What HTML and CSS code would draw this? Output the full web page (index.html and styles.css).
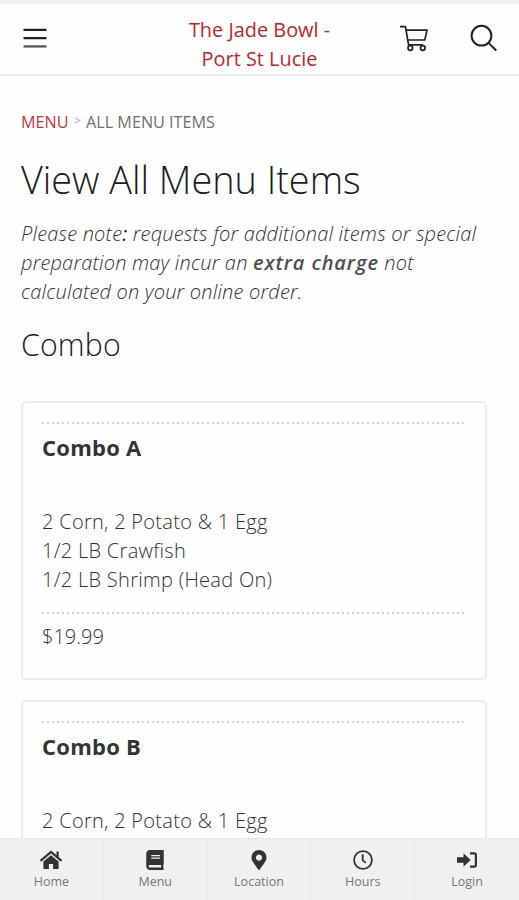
FILE: index.html
```html
<!DOCTYPE html>
<html lang="en">
<head>
<meta charset="utf-8">
<title>View All Menu Items</title>
<link rel="stylesheet" href="styles.css">
</head>
<body>
<div class="app">
  <header class="header">
    <svg class="burger" viewBox="0 0 24 22"><path d="M.5 3.8h23M.5 12.2h23"/><path class="soft" d="M.5 20.4h23"/></svg>
    <a class="brand"><span>The Jade Bowl -</span><br><span>Port St Lucie</span></a>
    <div class="actions">
      <svg class="cart" viewBox="0 0 30 28"><path d="M1 2.6H6.4L9.600 20.800H24M7.200 6.200H28L25.800 16H9"/><circle cx="11.300" cy="24" r="2.300"/><circle cx="23.800" cy="24" r="2.300"/></svg>
      <svg class="search" viewBox="0 0 28 28"><circle cx="11.500" cy="11.700" r="9.900"/><path d="M18.500 18.900l7.700 7.600"/></svg>
    </div>
  </header>
  <main class="content">
    <nav class="crumbs"><a class="c1">MENU</a><span class="sep">&gt;</span><span class="c2">ALL MENU ITEMS</span></nav>
    <h1><span>View All Menu Items</span></h1>
    <p class="note"><span>Please note<b>:</b> requests for additional items or special</span><br><span>preparation may incur an <strong>extra charge</strong> not</span><br><span>calculated on your online order.</span></p>
    <h2><span>Combo</span></h2>
    <section class="card">
      <h3><span>Combo A</span></h3>
      <p class="desc"><span>2 Corn, 2 Potato &amp; 1 Egg</span><br><span>1/2 LB Crawfish</span><br><span>1/2 LB Shrimp (Head On)</span></p>
      <p class="price"><span>$19.99</span></p>
    </section>
    <section class="card">
      <h3><span>Combo B</span></h3>
      <p class="desc"><span>2 Corn, 2 Potato &amp; 1 Egg</span></p>
    </section>
  </main>
  <nav class="tabs">
    <a class="tab"><svg viewBox="0 0 24 20"><path class="line" d="M1.500 10.800L12 1.900l10.500 8.900M18.600 1.600v6"/><path d="M12 5.200l7.600 6.400V19h-5.500v-5H9.900v5H4.400v-7.400z"/></svg><span>Home</span></a>
    <a class="tab"><svg viewBox="-40 0 528 512"><path d="M448 360V24c0-13.300-10.700-24-24-24H96C43 0 0 43 0 96v320c0 53 43 96 96 96h328c13.300 0 24-10.700 24-24v-16c0-7.500-3.500-14.300-8.900-18.700-4.200-15.400-4.200-59.300 0-74.700 5.400-4.300 8.900-11.100 8.900-18.600zM128 134c0-3.300 2.700-6 6-6h212c3.300 0 6 2.700 6 6v20c0 3.300-2.700 6-6 6H134c-3.300 0-6-2.700-6-6zm0 64c0-3.300 2.700-6 6-6h212c3.300 0 6 2.700 6 6v20c0 3.300-2.700 6-6 6H134c-3.300 0-6-2.700-6-6zm253.400 250H96c-17.700 0-32-14.300-32-32 0-17.600 14.400-32 32-32h285.400c-1.900 17.100-1.900 46.900 0 64z"/></svg><span>Menu</span></a>
    <a class="tab"><svg viewBox="0 0 384 512"><path d="M172.300 501.700C27 291 0 269.400 0 192 0 86 86 0 192 0s192 86 192 192c0 77.400-27 99-172.300 309.700-9.500 13.700-29.900 13.700-39.400 0zM192 272c44.200 0 80-35.800 80-80s-35.800-80-80-80-80 35.800-80 80 35.800 80 80 80z"/></svg><span>Location</span></a>
    <a class="tab"><svg viewBox="0 0 20 20"><circle class="ring" cx="10" cy="10" r="8.900"/><path class="hand" d="M9.700 4.200v6.200l3.200 2.500"/></svg><span>Hours</span></a>
    <a class="tab"><svg viewBox="0 0 22 20"><path d="M1 7.200h6.500V3.200L14.700 10l-7.200 6.800v-4H1z"/><path class="door" d="M14 3.300h4.200q1.700 0 1.700 1.700v10q0 1.700-1.700 1.700H14"/></svg><span>Login</span></a>
  </nav>
</div>
</body>
</html>
```
FILE: styles.css
```css
* { box-sizing: border-box; }
body {
  margin: 0;
  background: #fefefe;
  color: #333;
  font: 300 20px/28.800px "Open Sans", sans-serif;
}
h1, h2, h3, p { margin: 0; font-weight: 300; }
span { white-space: nowrap; }
.app { height: 900px; display: flex; flex-direction: column; overflow: hidden; }
.header {
  flex: none;
  height: 76px;
  border-top: 4px solid #f0f0f0;
  border-bottom: 2px solid #ebebeb;
  padding: 0 21px 0 23px;
  display: grid;
  grid-template-columns: 110px 1fr 110px;
}
.header svg { fill: none; stroke: #222; }
.burger { width: 24px; height: 22px; margin-top: 22px; stroke-width: 2.300; }
.burger .soft { stroke: #555; }
.brand { color: #bd272c; text-align: center; padding: 12px 2px 0 0; font-size: 19.900px; font-weight: 400; line-height: 28.500px; }
.actions { display: flex; justify-content: flex-end; gap: 41px; padding-top: 20px; }
.cart { width: 30px; height: 28px; stroke-width: 1.700; }
.search { width: 28px; height: 28px; stroke-width: 2; }
.content { flex: 1; min-height: 0; overflow: hidden; padding: 32px 32px 0 21px; }
.crumbs { height: 28px; line-height: 29px; font-size: 16.200px; font-weight: 400; display: flex; color: #707070; }
.c1 { color: #c5383c; width: 53px; }
.sep { color: #aaa; font-size: 12px; width: 12px; line-height: 26px; }
h1 { margin-top: 17px; font-size: 37.800px; line-height: 54px; color: #1c1c1c; }
.note { margin-top: 13px; font-style: italic; letter-spacing: 0.190px; }
.note strong { font-weight: 600; letter-spacing: 0.900px; color: #505050; }
.note b { font-weight: 400; color: #111; }
h2 { margin-top: 18px; font-size: 30.300px; line-height: 42px; color: #1c1c1c; letter-spacing: 0.150px; }
.card { border: 2px solid #ededed; border-radius: 5px; height: 279px; padding: 19px 19px; margin-bottom: 20px; }
h2 + .card { margin-top: 35px; }
.card h3, .price {
  background: repeating-linear-gradient(90deg, #d2d2d2 0 2px, transparent 2px 5px) 0 0 / 424px 2px no-repeat;
}
.card h3 { font-size: 22px; font-weight: 700; color: #333; padding-top: 11px; line-height: 29px; height: 86px; letter-spacing: 0.250px; }
.desc { height: 104px; letter-spacing: 0.290px; }
.price { padding-top: 11px; }
.tabs {
  flex: none;
  height: 62px;
  display: grid;
  grid-template-columns: repeat(5, 1fr);
  background: #f0f0f0;
  border-top: 1px solid #e8e8e8;
}
.tab {
  display: flex;
  flex-direction: column;
  align-items: center;
  padding: 11px 0 0 0;
  font-size: 12.500px;
  font-weight: 400;
  line-height: 18px;
  color: #777;
  border-right: 1px solid #e8e8e8;
}
.tab:last-child { border-right: 0; }
.tab svg { height: 20px; width: 24px; fill: #333; margin-bottom: 3px; }
.tab .line { fill: none; stroke: #333; stroke-width: 2.200; }
.tab .ring, .tab .hand, .tab .door { fill: none; stroke: #333; stroke-width: 1.800; }
.tab .door { stroke-width: 2.200; }
```
